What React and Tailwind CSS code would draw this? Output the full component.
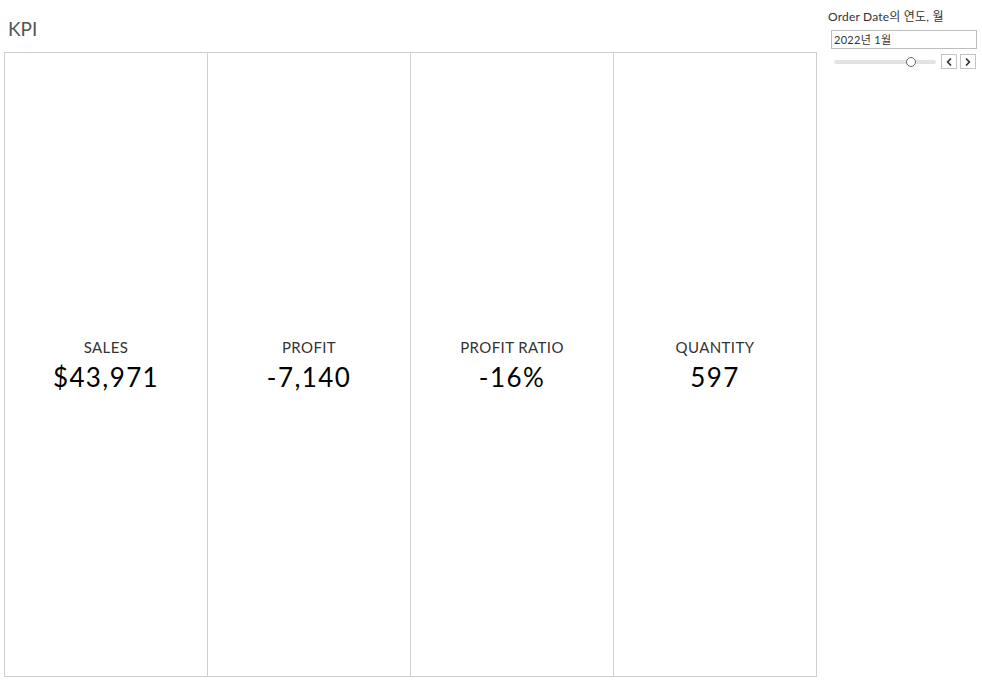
import { ChevronLeft, ChevronRight } from "lucide-react";

const kpis = [
  { label: "SALES", value: "$43,971" },
  { label: "PROFIT", value: "-7,140" },
  { label: "PROFIT RATIO", value: "-16%" },
  { label: "QUANTITY", value: "597" },
];

const KpiCard = ({ label, value, last }) => (
  <div
    className={
      "flex-1 flex flex-col items-center justify-center pt-[1px] " +
      (last ? "" : "border-r border-[#cfcfcf]")
    }
  >
    <div className="text-[15px] leading-[18px] text-[#333] tracking-[0.4px]">{label}</div>
    <div className="text-[26px] leading-[32px] text-black tracking-[1.4px] mt-[5px]">{value}</div>
  </div>
);

export default function App() {
  return (
    <div
      className="w-[982px] h-[688px] bg-white flex"
      style={{ fontFamily: "Lato, 'Noto Sans CJK KR', sans-serif" }}
    >
      {/* main area */}
      <div className="w-[817px] flex flex-col pl-[4px] pb-[11px]">
        <div className="h-[52px] flex items-center pl-[4px] pt-[6px] text-[19px] text-[#555]">
          KPI
        </div>
        <div className="flex-1 flex border border-[#cfcfcf]">
          {kpis.map((k, i) => (
            <KpiCard key={k.label} {...k} last={i === kpis.length - 1} />
          ))}
        </div>
      </div>

      {/* filter panel */}
      <div className="flex-1 pl-[11px] pt-[10px]">
        <div className="text-[12px] leading-[14px] text-[#333] tracking-[0.2px]">Order Date의 연도, 월</div>
        <div className="mt-[6px] ml-[3px] w-[146px] h-[19px] border border-[#bdbdbd] text-[11px] leading-[17px] pl-[2px] text-[#333] tracking-[0.3px]">
          2022년 1월
        </div>
        <div className="mt-[5px] ml-[6px] flex items-center">
          <div className="relative w-[102px] h-[4px] bg-[#e3e3e3] rounded">
            <div className="absolute left-[72px] top-[-3px] w-[10px] h-[10px] rounded-full border border-[#666] bg-white" />
          </div>
          <div className="ml-[5px] w-[16px] h-[15px] border border-[#c4c4c4] flex items-center justify-center">
            <ChevronLeft size={12} strokeWidth={3.5} color="#333" />
          </div>
          <div className="ml-[3px] w-[16px] h-[15px] border border-[#c4c4c4] flex items-center justify-center">
            <ChevronRight size={12} strokeWidth={3.5} color="#333" />
          </div>
        </div>
      </div>
    </div>
  );
}
